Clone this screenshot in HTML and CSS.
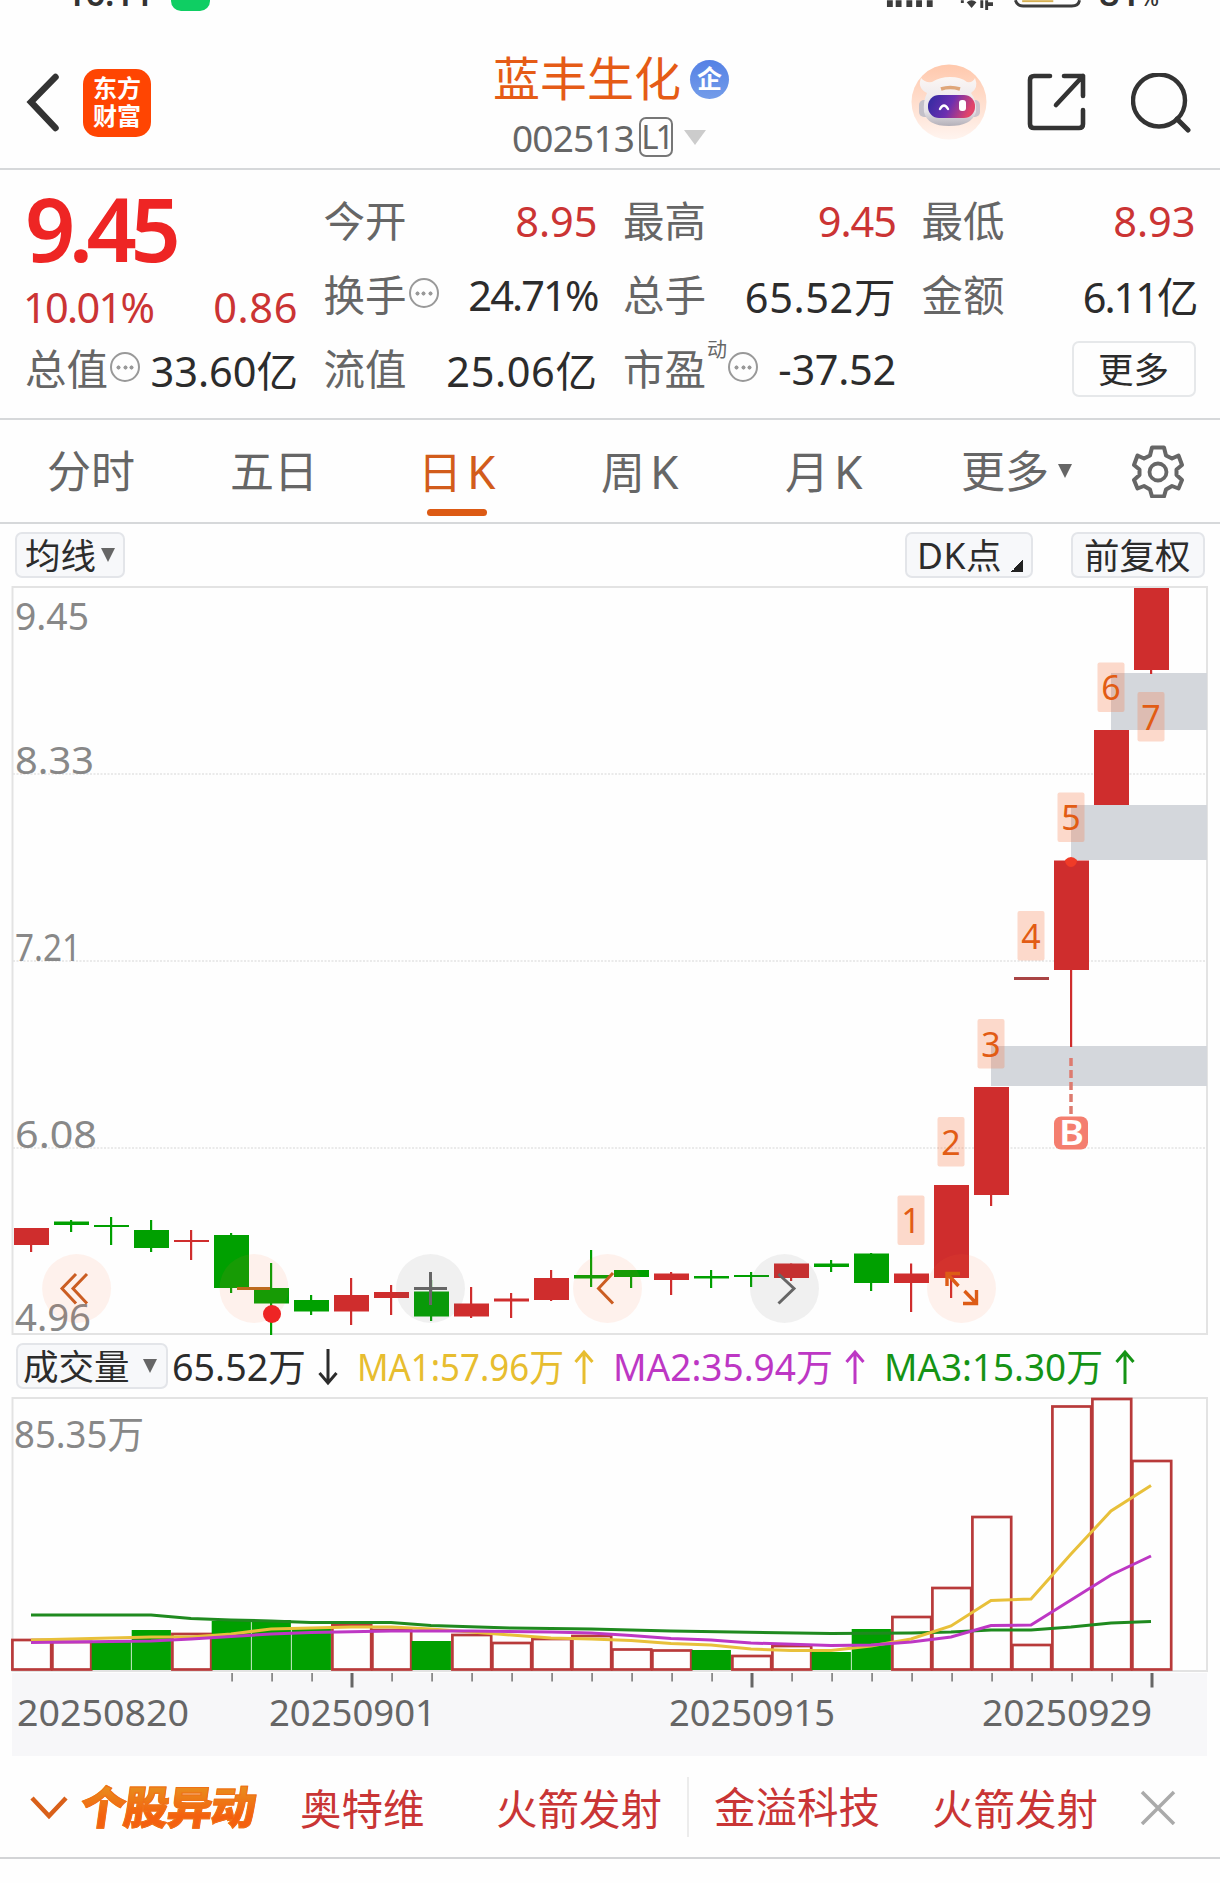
FILE: index.html
```html
<!DOCTYPE html>
<html lang="zh-CN">
<head>
<meta charset="utf-8">
<title>蓝丰生化 002513</title>
<link rel="stylesheet" href="styles.css">
</head>
<body>
<div class="app">
  <div class="status">
    <span class="clock">16:11</span>
    <i class="chat-app"></i>
    <svg class="status-icons" width="220" height="14" viewBox="0 0 220 14">
      <path d="M2 0h6v7H2zM11 0h6v7h-6zM22 0h6v7h-6zM32 0h6v7h-6zM43 0h6v7h-6z" fill="#3c3c3c"/>
      <path d="M84 2q5-4 10 0l-5 6zM78 0h3v3h-3zM98 0h3v8h-3zM103 0h3v10h-3zM106 2h5v4h-5z" fill="#3c3c3c"/>
      <path d="M131 0q2 6 8 6h50q7 0 8-6" transform="translate(3 0)" fill="none" stroke="#3c3c3c" stroke-width="3"/>
      <path d="M141 0h32v2h-32z" fill="#d6b052"/>
    </svg>
    <span class="charge">81<small>%</small></span>
  </div>

  <header class="header">
    <div class="head-left">
      <svg width="36" height="60" viewBox="0 0 36 60"><path d="M29.500 5L5 30l24.500 26" transform="translate(0 -1)" fill="none" stroke="#333" stroke-width="6.500" stroke-linecap="round" stroke-linejoin="miter"/></svg>
      <div class="logo">东方<br>财富</div>
    </div>
    <div class="head-title">
      <div class="name"><span class="stock-name">蓝丰生化</span><span class="qi">企</span></div>
      <div class="code"><span>002513</span><span class="level">L1</span><i class="tri-code"></i></div>
    </div>
    <div class="head-right">
      <svg width="76" height="76" viewBox="0 0 76 76">
        <defs>
          <linearGradient id="halo" x1="0" y1="0" x2="0" y2="1"><stop offset="0" stop-color="#ffc8ac"/><stop offset="1" stop-color="#fff4ef"/></linearGradient>
          <linearGradient id="visor" x1="0" y1="0" x2="1" y2=".25"><stop offset="0" stop-color="#2e2aa0"/><stop offset=".55" stop-color="#6c2fb0"/><stop offset="1" stop-color="#e2456a"/></linearGradient>
          <linearGradient id="shell" x1="0" y1="0" x2="0" y2="1"><stop offset="0" stop-color="#fbf6f4"/><stop offset=".7" stop-color="#e6e3e7"/><stop offset="1" stop-color="#b3afb8"/></linearGradient>
        </defs>
        <circle cx="38" cy="38" r="37.5" fill="url(#halo)"/>
        <rect x="8" y="36" width="12" height="17" rx="5" fill="#c3c0c9"/><rect x="57" y="36" width="12" height="17" rx="5" fill="#ccc4cd"/>
        <path d="M16 29Q6 24 10 14Q14 19 21 18Q29 13 39 13Q50 13 56 18Q62 19 64 14Q68 24 60 29Q66 37 65 48Q61 62 38 62Q16 62 13 48Q12 37 16 29Z" fill="url(#shell)"/>
        <rect x="17" y="31" width="47" height="23" rx="11" fill="url(#visor)"/>
        <path d="M29 45q4-7 8 0" fill="none" stroke="#fff" stroke-width="2.4" stroke-linecap="round"/>
        <rect x="48" y="36" width="7" height="11" rx="3" fill="#fff"/>
        <path d="M30 25q9-3 19 0" stroke="#dfa679" stroke-width="3.500" fill="none"/>
      </svg>
      <svg class="share" width="60" height="60" viewBox="0 0 60 60"><path d="M23 4H7q-4 0-4 4v44q0 4 4 4h45q4 0 4-4V38M37 4h19v20M56 4L29 33" fill="none" stroke="#333" stroke-width="4.6" stroke-linecap="round" stroke-linejoin="round"/></svg>
      <svg width="60" height="62" viewBox="0 0 60 62"><circle cx="28" cy="27.500" r="26" fill="none" stroke="#333" stroke-width="4.4"/><path d="M46 46l11 11" stroke="#333" stroke-width="5" stroke-linecap="round"/></svg>
    </div>
  </header>

  <section class="quote">
    <div class="col first">
      <div class="price">9.45</div>
      <div class="pair red change"><span class="tight">10.01%</span><span class="wide">0.86</span></div>
      <div class="pair"><label>总值<i class="info"></i></label><b>33.60亿</b></div>
    </div>
    <div class="col">
      <div class="pair"><label>今开</label><b class="red">8.95</b></div>
      <div class="pair"><label>换手<i class="info"></i></label><b class="pct">24.71%</b></div>
      <div class="pair"><label>流值</label><b class="wide">25.06亿</b></div>
    </div>
    <div class="col">
      <div class="pair"><label>最高</label><b class="red snug">9.45</b></div>
      <div class="pair"><label>总手</label><b class="wide">65.52万</b></div>
      <div class="pair"><label>市盈<sup>动</sup><i class="info"></i></label><b class="minus">-37.52</b></div>
    </div>
    <div class="col">
      <div class="pair"><label>最低</label><b class="red">8.93</b></div>
      <div class="pair"><label>金额</label><b class="ones">6.11亿</b></div>
      <div class="pair"><span class="more">更多</span></div>
    </div>
  </section>

  <nav class="tabs">
    <span>分时</span><span>五日</span><span class="active">日<em>K</em></span><span>周<em>K</em></span><span>月<em>K</em></span><span class="tab-more">更多<i class="tri"></i></span>
    <svg width="54" height="54" viewBox="-26 -28 54 54"><path d="M-6-24.500H6L8-16.500L14-13.500L20.500-16.500L24-7L18.500-2.500V3L24 8L20.500 16.500L14 14L8 17.500L6 24.500H-6L-8 17.500L-14 14L-20.500 16.500L-24 8L-18.500 3V-2.500L-24-7L-20.500-16.500L-14-13.500L-8-16.500Z" fill="none" stroke="#666" stroke-width="4" stroke-linejoin="round"/><circle r="8.500" fill="none" stroke="#666" stroke-width="3.800"/></svg>
  </nav>

  <div class="tools">
    <span class="chip">均线<i class="tri"></i></span>
    <span class="chip dk">DK点<i class="corner"></i></span>
    <span class="chip fq">前复权</span>
  </div>

  <svg class="chart" id="kline" width="1220" height="750" viewBox="0 586 1220 750"></svg>

  <div class="vol-head">
    <span class="chip vol">成交量<i class="tri"></i></span>
    <svg class="ma" id="ma" width="1040" height="50" viewBox="170 1341 1040 50"></svg>
  </div>

  <svg class="chart" id="volume" width="1220" height="360" viewBox="0 1397 1220 360"></svg>

  <footer class="ticker">
    <svg class="down" width="40" height="26" viewBox="0 0 40 26"><path d="M3 4l17 18L37 4" fill="none" stroke="#d9601a" stroke-width="4.500"/></svg>
    <span class="hot">个股异动</span>
    <span class="stock">奥特维</span><span class="event">火箭发射</span>
    <span class="stock second">金溢科技</span><span class="event third">火箭发射</span>
    <svg class="close" width="36" height="36" viewBox="0 0 36 36"><path d="M2 3l32 32M34 3L2 35" stroke="#aaa" stroke-width="3.500"/></svg>
  </footer>
</div>
<script src="chart.js"></script>
</body>
</html>
```
FILE: styles.css
```css
* { box-sizing: border-box; }
body { margin: 0; background: #fefefe; font-family: "Noto Sans", "Noto Sans CJK SC", sans-serif; color: #2c2c2c; }
.app { width: 1220px; height: 1883px; overflow: hidden; }
i, em, b { font-style: normal; font-weight: 400; }

.status { height: 30px; display: flex; align-items: flex-start; overflow: hidden; color: #333; padding-left: 66px; }
.clock { width: 105px; font-size: 34px; line-height: 36px; font-weight: 600; margin-top: -25px; }
.chat-app { width: 39px; height: 39px; margin-top: -28px; border-radius: 10px; background: #0fce63; }
.status-icons { margin-left: 675px; width: 214px; flex: none; }
.charge { font-size: 36px; line-height: 36px; font-weight: 600; margin-top: -25px; }
.charge small { font-size: 22px; font-weight: 500; }

.header { height: 140px; border-bottom: 2px solid #d6d8da; display: grid; grid-template-columns: 400px 420px 400px; }
.head-left { display: flex; align-items: flex-start; gap: 21px; padding: 43px 0 0 26px; }
.logo { width: 68px; height: 68px; margin-top: -4px; border-radius: 15px; background: #ff4502; color: #fff; font: 700 24px/28px "Noto Sans CJK SC", sans-serif; text-align: center; padding-top: 4px; }
.head-title { display: flex; flex-direction: column; padding-top: 20px; }
.name { display: flex; align-items: center; height: 58px; padding-left: 93px; font-size: 47px; color: #e55b16; }
.stock-name { margin-top: -8px; }
.qi { margin-left: 9px; width: 39px; height: 39px; border-radius: 50%; background: linear-gradient(#5581e5, #739ce9); color: #fff; font-size: 25px; font-weight: 700; line-height: 36px; text-align: center; }
.code { display: flex; align-items: center; height: 58px; padding-left: 512px; margin-left: -400px; font-size: 37px; color: #666; letter-spacing: -.8px; }
.level { margin-left: 5px; width: 34px; height: 40px; border: 2px solid #777; border-radius: 7px; font-size: 33px; line-height: 36px; text-align: center; letter-spacing: -3px; }
.tri-code { margin-left: 11px; border: 11px solid transparent; border-top: 15px solid #ccc; border-bottom: 0; }
.head-right { display: flex; align-items: flex-start; padding: 34px 0 0 91px; }
.head-right svg { flex: none; }
.head-right .share { margin: 8px 45px 0 40px; }
.head-right svg:last-child { margin-top: 9px; margin-left: -1px; }

.quote { height: 250px; border-bottom: 2px solid #d6d8da; padding: 14px 24px 0 25px; display: grid; grid-template-columns: 273px 274px 273px 274px; column-gap: 25.500px; font-size: 41.500px; }
.col { display: grid; grid-template-rows: 74px 74px 74px; }
.first { grid-template-rows: 88px 60px 74px; }
.pair { display: flex; align-items: center; justify-content: space-between; white-space: nowrap; }
.pair label { display: flex; align-items: center; color: #666; margin-top: -4px; }
.pair b { margin-top: -1px; }
.pair sup { width: 19px; font-size: 20px; line-height: 20px; margin: 0 0 34px 1px; }
.red { color: #cb3434; }
.price { font-size: 88px; line-height: 88px; font-weight: 600; color: #ee2524; letter-spacing: -6.500px; }
.change { padding-top: 10px; }
.tight { letter-spacing: -1.700px; margin-left: -2px; }
.wide { letter-spacing: .6px; }
.snug { letter-spacing: -1px; }
.minus { letter-spacing: -.3px; }
.pct { letter-spacing: -1.900px; }
.ones { letter-spacing: -2px; margin-right: -1px; }
.info { width: 30px; height: 30px; margin: 0 0 0 2px; border: 2px solid #999; border-radius: 50%; background: radial-gradient(circle, #999 1.800px, transparent 2.300px) center / 7px 7px no-repeat, radial-gradient(circle, #999 1.800px, transparent 2.300px) 3px center / 7px 7px no-repeat, radial-gradient(circle, #999 1.800px, transparent 2.300px) 16px center / 7px 7px no-repeat; }
.more { margin-left: auto; width: 124px; height: 56px; border: 2px solid #e6e8ea; border-radius: 7px; font-size: 35.500px; line-height: 52px; text-align: center; }

.tabs { height: 104px; border-bottom: 2px solid #d6d8da; display: grid; grid-template-columns: 183px 184px 185px 184px 184px 212px 88px; align-items: center; font-size: 44px; color: #666; }
.tabs span { height: 102px; line-height: 102px; padding-left: 47px; white-space: nowrap; position: relative; }
.tabs em { margin-left: 5px; font-size: 46px; }
.tabs .active { color: #d25c1b; padding-left: 51px; }
.tabs .active::after { content: ""; position: absolute; left: 60px; bottom: 6px; width: 60px; height: 7px; border-radius: 4px; background: #dc5a14; }
.tabs span:nth-child(4), .tabs span:nth-child(5) { padding-left: 49px; }
.tabs .tab-more { display: flex; align-items: center; padding-left: 41px; }
.tri { flex: none; border: 7.500px solid transparent; border-top: 14px solid #666; border-bottom: 0; margin-left: 9px; }

.tools { height: 62px; display: flex; align-items: flex-start; padding: 8px 15px 0 15px; }
.chip { height: 46px; display: flex; align-items: center; border: 2px solid #e3e5e9; border-radius: 7px; background: #f7f8fa; font-size: 35.500px; line-height: 42px; white-space: nowrap; padding: 0 8px 0; }
.chip .tri { margin-left: 5px; }
.dk { margin-left: auto; width: 128px; padding-left: 10px; letter-spacing: .5px; }
.corner { width: 12px; height: 12px; margin: 22px 0 0 9px; flex: none; background: linear-gradient(135deg, transparent 50%, #222 50%); }
.fq { margin-left: 38px; width: 134px; padding-left: 11px; }
.chart { display: block; }
.vol-head { height: 61px; display: flex; align-items: flex-start; padding: 7px 0 0 16px; }
.vol { width: 152px; padding-left: 5px; }
.chip.vol .tri { margin-left: 13px; }
.ma { margin: -2px 0 0 2px; }

.ticker { height: 102px; border-bottom: 2px solid #d3d4d6; display: flex; align-items: center; font-size: 41.500px; color: #c93535; white-space: nowrap; padding: 0 0 0 29px; }
.down { flex: none; }
.hot { width: 188px; margin-left: 8px; padding-left: 4px; flex: none; font-size: 45px; line-height: 60px; font-weight: 900; letter-spacing: -1.500px; transform: skewX(-8deg); color: transparent; background: linear-gradient(#e98a1c 20%, #f4600f 65%); -webkit-background-clip: text; background-clip: text; -webkit-text-stroke: 1px #f07015; }
.stock { width: 196px; margin-left: 35px; flex: none; }
.event { width: 191px; flex: none; }
.second { margin-left: 0; width: 245px; border-left: 2px solid #ececec; line-height: 60px; padding-left: 25px; }
.third { width: 210px; }
.close { flex: none; margin-left: -2px; }
text { font-family: "Noto Sans", "Noto Sans CJK SC", sans-serif; }
```
FILE: chart.js
```js
const RED = '#cf2d2d', GREEN = '#00a000';
const x = i => 31.5 + 40 * i;
const rect = (x, y, w, h, fill, extra = '') => `<rect x="${x}" y="${y}" width="${w}" height="${h}" fill="${fill}" ${extra}/>`;
const text = (s, x, y, size, fill, len, extra = '') => `<text x="${x}" y="${y}" font-size="${size}" fill="${fill}" ${len ? `textLength="${len}" lengthAdjust="spacingAndGlyphs"` : ''} ${extra}>${s}</text>`;
const path = (d, stroke, w, extra = '') => `<path d="${d}" fill="none" stroke="${stroke}" stroke-width="${w}" ${extra}/>`;

// colour, body top, body bottom, high, low
const candles = [
  ['r',1228,1245,1228,1252],['g',1221.5,1225,1220,1232],['g',1225,1227,1217,1245],['g',1230,1248,1220,1252],
  ['r',1240,1242,1230,1260],['g',1235,1288,1233,1293],['g',1288,1303.5,1263,1335],['g',1300,1311.5,1295,1315],
  ['r',1295,1311.5,1278,1325],['r',1292,1298,1285,1315],['g',1291.5,1316.5,1280,1321],['r',1303.5,1316.5,1287,1318],
  ['r',1298.5,1301.5,1293,1318],['r',1278,1300,1270,1301],['g',1275,1278.5,1250,1287],['g',1270,1277,1270,1288],
  ['r',1273.5,1280,1272,1295],['g',1276,1278.5,1270,1288],['g',1275,1277,1272,1287],['r',1263.5,1278,1263.5,1281],
  ['g',1263.5,1267,1260,1272],['g',1253.5,1283,1253,1291],['r',1273.5,1283,1263.5,1312],['r',1185,1278,1185,1298],
  ['r',1087,1195,1087,1206],['r',977,980,977,980],['r',860.5,970,860.5,1047],['r',730,805,730,805],['r',588,670,588,674]
];
let k = rect(12.5, 587, 1194.5, 747, 'none', 'stroke="#e3e3e3" stroke-width="2"');
for (const y of [774, 961, 1148]) k += path(`M13 ${y}H1206`, '#e4e4e4', 1.5, 'stroke-dasharray="2 1.500"');
k += rect(1111, 673, 96, 57, '#d4d7dc') + rect(1071, 805, 136, 55, '#d4d7dc') + rect(991, 1046, 216, 40, '#d4d7dc');
candles.forEach(([c, t, b, hi, lo], i) => {
  const f = c === 'r' ? RED : GREEN;
  k += rect(x(i) - 1.5, hi, 2.2, lo - hi, f) + rect(x(i) - 17.5, t, 35, b - t, i === 25 ? '#a94444' : f);
});
[['9.45', 630, 74], ['8.33', 774, 79], ['7.21', 961, 66], ['6.08', 1148, 82], ['4.96', 1331, 76]].forEach(([s, y, w]) => k += text(s, 15, y, 39, '#888', w));
[[911, 1195.5], [951, 1117], [991, 1019], [1031, 911], [1071, 792.5], [1111, 662.5], [1151, 692]].forEach(([cx, y], i) => {
  k += rect(cx - 13.5, y, 27, 49.5, '#f8713a', 'fill-opacity=".26" rx="2"');
  k += text(i + 1, cx, y + 37.8, 34, '#e25c14', 0, 'text-anchor="middle"');
});
k += '<path d="M1065 860a6 7 0 0 0 12 0q-6-6-12 0z" fill="#f03b27"/>' + path('M1071 1058v56', '#dd7b6f', 3.5, 'stroke-dasharray="8 4"');
k += rect(1054, 1116.5, 34, 33, '#f47e6f', 'rx="7"') + text('B', 1059, 1145, 34, '#fff', 25, 'font-weight="600"');
[76.6, 254, 430.5, 607.5, 784.5, 961.5].forEach((cx, i) => k += `<circle cx="${cx}" cy="1288.5" r="34.5" fill="${i === 2 || i === 4 ? '#666' : '#fa6e32'}" fill-opacity=".09"/>`);
k += '<circle cx="272" cy="1314" r="9" fill="#ee2524"/>';
k += path('M76 1274L62 1288.500L76 1303.500M87 1274L73 1288.500L87 1303.500', '#cb5d22', 3);
k += path('M237 1288.500h33', '#bd6a1d', 3) + path('M414 1288.500h33M430.500 1272v33', '#666', 3);
k += path('M613 1273L598.500 1288.500L613 1303.500', '#cb5d22', 3) + path('M778.500 1274L794 1288.500L778.500 1303.500', '#666', 3);
k += path('M947 1286V1273.500H960M947 1273.500L958.500 1286M964.500 1291L976.500 1303.500M976.500 1290V1303.500H963', '#dd5c16', 3.4);
document.getElementById('kline').innerHTML = k;

const arrow = (cx, up, c) => path(up ? `M${cx} 1384V1352M${cx - 8.5} 1362L${cx} 1352L${cx + 8.5} 1362` : `M${cx} 1349V1382M${cx - 8.5} 1373L${cx} 1383L${cx + 8.5} 1373`, c, 3);
document.getElementById('ma').innerHTML =
  text('65.52万', 172, 1381, 38, '#2c2c2c', 134) + arrow(328, false, '#2c2c2c') +
  text('MA1:57.96万', 357, 1381, 38, '#e7bd2f', 207) + arrow(584, true, '#e7bd2f') +
  text('MA2:35.94万', 613, 1381, 38, '#bd37c4', 220) + arrow(855, true, '#bd37c4') +
  text('MA3:15.30万', 884, 1381, 38, '#159315', 219) + arrow(1125, true, '#159315');

const bars = 'r1640 r1642 g1642 g1631 r1634 g1622 g1621 g1630 r1625 r1630 g1642 r1635 r1643 r1639 r1636 r1649.500 r1650.500 g1651 r1656 r1646 g1653 g1630 r1617 r1588 r1517 r1645 r1406.500 r1399 r1461'.split(' ');
const bottom = 1669.5;
let v = rect(12.5, 1398, 1194.5, 273, 'none', 'stroke="#e3e3e3" stroke-width="2"') + rect(12, 1673, 1195, 83, '#f7f7f9');
v += text('85.35万', 14, 1448, 38, '#888', 130);
bars.forEach((b, i) => {
  const y = +b.slice(1), left = 11.7 + 40 * i;
  v += b[0] === 'g' ? rect(left, y - 1, 39.2, 1671 - y, GREEN) : rect(left + .7, y, 38.8, bottom - y, 'none', 'stroke="#b83a3a" stroke-width="2.700"');
});
v += path('M31 1615H151L191 1618.500L231 1620L271 1621L311 1622.500H391L431 1625.500L511 1628L591 1629L671 1631L831 1633.500L911 1633L951 1632L991 1630H1031L1071 1627L1111 1623L1151 1621.500', '#1f8a1f', 3);
v += path('M31 1640L151 1637H191L231 1634L271 1629L311 1628L351 1627H391L431 1629L471 1632L511 1635L551 1638L591 1639L631 1640.500L671 1643.500L711 1645L751 1649L791 1650.500H831L871 1646L911 1639L951 1626L991 1600.500L1031 1599L1071 1554L1111 1511L1151 1485.500', '#e8c03a', 3);
v += path('M31 1642.500L151 1641L191 1639L231 1636.500L271 1634L311 1632.500L391 1631H471L551 1632L591 1633L631 1635.500L671 1638.500L711 1640L751 1643L831 1645.500L871 1645L911 1642L951 1637L991 1625.500L1031 1625L1071 1600L1111 1575L1151 1556', '#bd37c4', 3);
for (let i = 5; i < 29; i++) {
  const big = i % 10 === 8;
  v += rect(x(i) - (big ? 1 : .3), 1673, big ? 3 : 1.8, big ? 14.5 : 8.5, big ? '#666' : '#888');
}
[['20250820', 17, 172], ['20250901', 269, 167], ['20250915', 669, 166], ['20250929', 982, 170]].forEach(([s, l, w]) => v += text(s, l, 1726, 37, '#666', w));
document.getElementById('volume').innerHTML = v;
```
